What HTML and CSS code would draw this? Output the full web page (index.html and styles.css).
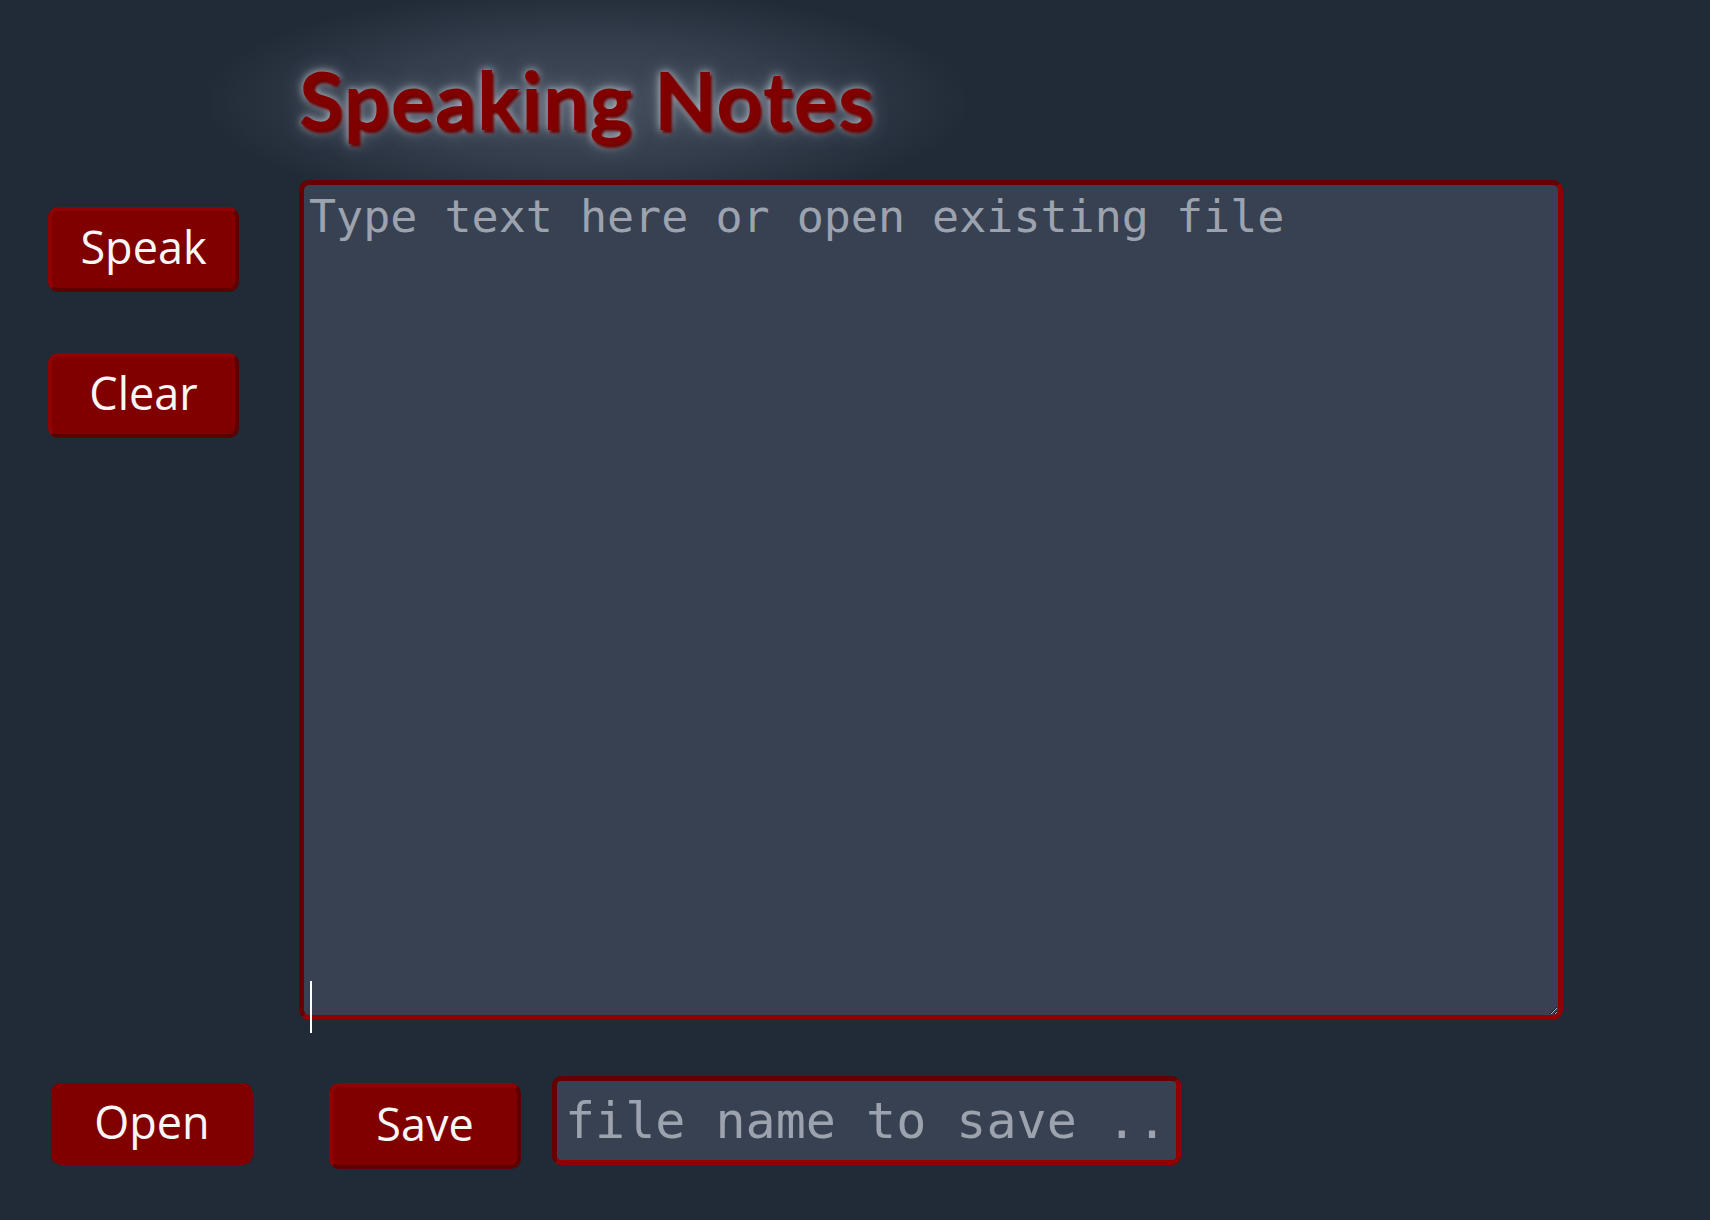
FILE: index.html
```html
<!DOCTYPE html>
<html lang="en">
<head>
<meta charset="utf-8">
<title>Speaking Notes</title>
<link rel="stylesheet" href="styles.css">
</head>
<body>
<div class="app">
  <div class="spacer"></div>
  <h1 class="title">Speaking Notes</h1>
  <div class="side">
    <button class="btn">Speak</button>
    <button class="btn">Clear</button>
  </div>
  <div class="editor">
    <textarea class="notes" placeholder="Type text here or open existing file"></textarea>
    <span class="caret"></span>
  </div>
</div>
<div class="bottom">
  <label class="btn-open">Open</label>
  <button class="btn btn-save">Save</button>
  <input class="filename" type="text" placeholder="file name to save ..">
</div>
</body>
</html>
```
FILE: styles.css
```css
html, body {
  margin: 0;
  padding: 0;
}
body {
  background: #212a37;
  width: 1710px;
  height: 1220px;
  overflow: hidden;
  font-family: "Open Sans", "Noto Sans", sans-serif;
}
.app {
  display: grid;
  grid-template-columns: 191px 1264px;
  column-gap: 60px;
  padding: 50px 0 0 48px;
}
.title {
  position: relative;
  justify-self: start;
  margin: 0 0 33px 0;
  font-family: Lato, "Open Sans", sans-serif;
  font-weight: 700;
  font-size: 81px;
  letter-spacing: 1px;
  line-height: 1.2;
  color: #800000;
  text-shadow:
    2px 3px 3px #6a0000,
    0 0 9px rgba(225, 232, 242, 0.8),
    0 0 22px rgba(200, 210, 225, 0.35);
  white-space: nowrap;
}
.title::before {
  content: "";
  position: absolute;
  left: -90px;
  right: -90px;
  top: -60px;
  bottom: -45px;
  background: radial-gradient(ellipse at 50% 55%, rgba(150, 162, 180, 0.28) 0%, rgba(150, 162, 180, 0.16) 40%, rgba(150, 162, 180, 0) 72%);
  z-index: -1;
  pointer-events: none;
}
.side {
  display: flex;
  flex-direction: column;
  gap: 61px;
  padding-top: 27px;
}
.btn {
  box-sizing: border-box;
  width: 191px;
  height: 85px;
  padding: 0 0 6px 0;
  background: #800000;
  color: #f7f7f7;
  font-family: "Open Sans", "Noto Sans", sans-serif;
  font-size: 45px;
  line-height: 1;
  border: 4px solid;
  border-color: #8e0404 #5e0000 #5e0000 #8e0404;
  border-radius: 10px;
  display: flex;
  align-items: center;
  justify-content: center;
  cursor: pointer;
}
.editor {
  position: relative;
}
.notes {
  display: block;
  box-sizing: border-box;
  width: 1264px;
  height: 840px;
  margin: 0;
  padding: 5px;
  background: #374151;
  color: #e5e7eb;
  border: 5px solid;
  border-color: #680000 #900000 #900000 #680000;
  border-radius: 10px;
  font-family: "DejaVu Sans Mono", monospace;
  font-size: 45px;
  outline: none;
}
.notes::placeholder,
.filename::placeholder {
  color: #9ca3af;
  opacity: 1;
}
.caret {
  position: absolute;
  left: 11px;
  top: 801px;
  width: 2px;
  height: 52px;
  background: #ffffff;
}
.bottom {
  display: flex;
  align-items: flex-start;
  margin-top: 56px;
  padding-left: 51px;
}
.btn-open {
  box-sizing: border-box;
  width: 202px;
  height: 82px;
  margin-top: 7px;
  padding-bottom: 6px;
  background: #800000;
  color: #f7f7f7;
  font-size: 45px;
  line-height: 1;
  border-radius: 10px;
  display: flex;
  align-items: center;
  justify-content: center;
  cursor: pointer;
}
.btn-save {
  width: 192px;
  height: 86px;
  margin-top: 7px;
  margin-left: 76px;
}
.filename {
  box-sizing: border-box;
  width: 629px;
  height: 89px;
  margin: 0 0 0 31px;
  padding: 0 8px;
  background: #374151;
  color: #e5e7eb;
  border: 5px solid;
  border-color: #660000 #900000 #900000 #660000;
  border-radius: 9px;
  font-family: "DejaVu Sans Mono", monospace;
  font-size: 50px;
  outline: none;
}
```
